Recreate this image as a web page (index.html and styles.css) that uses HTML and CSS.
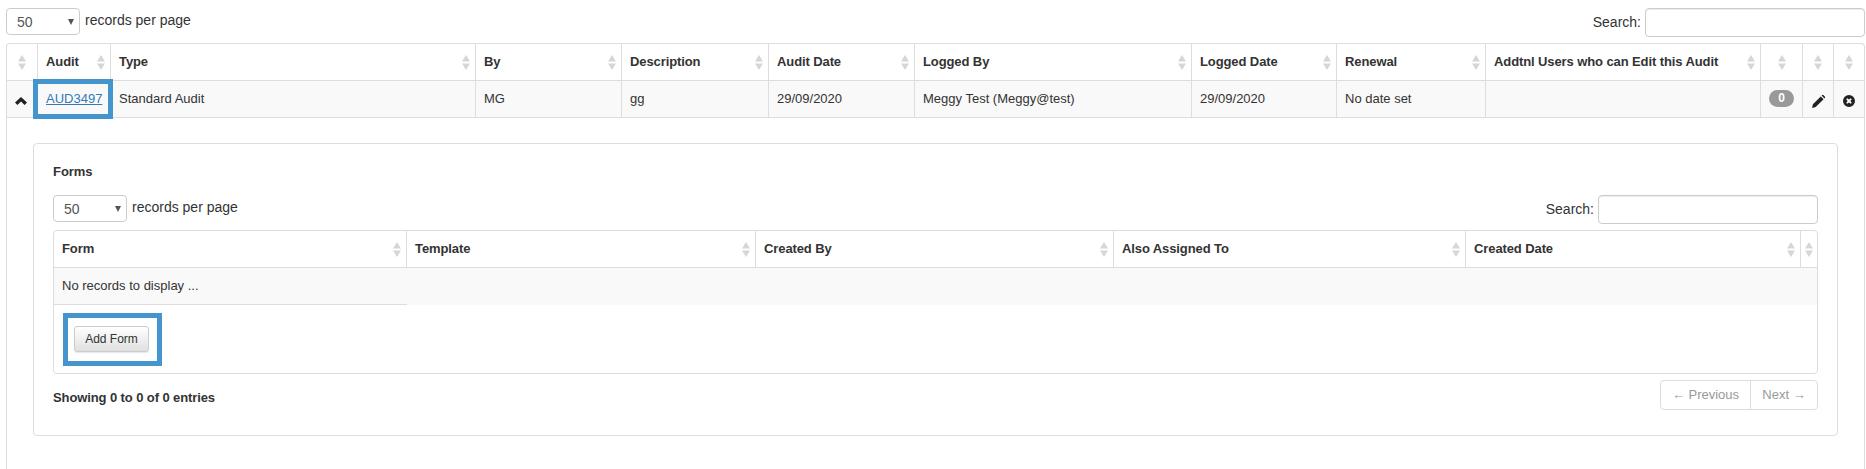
FILE: index.html
```html
<!DOCTYPE html>
<html lang="en">
<head>
<meta charset="utf-8">
<title>Audits</title>
<link rel="stylesheet" href="styles.css">
</head>
<body>
<svg class="defs" width="0" height="0" aria-hidden="true">
  <symbol id="sort" viewBox="0 0 8 15"><path d="M4 0 8 6.5H0Z" fill="#d6d6d6"/><path d="M0 8.5H8L4 15Z" fill="#d6d6d6"/></symbol>
</svg>
<main class="page">
  <div class="controls">
    <label class="length"><span class="select-wrap"><select class="select"><option>50</option></select></span> records per page</label>
    <label class="search">Search: <input class="search-input" type="text"></label>
  </div>
  <div class="outer">
    <table class="grid audits">
      <colgroup>
        <col class="a1"><col class="a2"><col class="a3"><col class="a4"><col class="a5"><col class="a6"><col class="a7"><col class="a8"><col class="a9"><col class="a10"><col class="a11"><col class="a12"><col class="a13">
      </colgroup>
      <thead>
        <tr>
          <th class="tight"><div class="th"><span></span><svg class="sort"><use href="#sort"/></svg></div></th>
          <th><div class="th"><span>Audit</span><svg class="sort"><use href="#sort"/></svg></div></th>
          <th><div class="th"><span>Type</span><svg class="sort"><use href="#sort"/></svg></div></th>
          <th><div class="th"><span>By</span><svg class="sort"><use href="#sort"/></svg></div></th>
          <th><div class="th"><span>Description</span><svg class="sort"><use href="#sort"/></svg></div></th>
          <th><div class="th"><span>Audit Date</span><svg class="sort"><use href="#sort"/></svg></div></th>
          <th><div class="th"><span>Logged By</span><svg class="sort"><use href="#sort"/></svg></div></th>
          <th><div class="th"><span>Logged Date</span><svg class="sort"><use href="#sort"/></svg></div></th>
          <th><div class="th"><span>Renewal</span><svg class="sort"><use href="#sort"/></svg></div></th>
          <th><div class="th"><span>Addtnl Users who can Edit this Audit</span><svg class="sort"><use href="#sort"/></svg></div></th>
          <th class="tight"><div class="th"><span></span><svg class="sort"><use href="#sort"/></svg></div></th>
          <th class="tight"><div class="th"><span></span><svg class="sort"><use href="#sort"/></svg></div></th>
          <th class="tight"><div class="th"><span></span><svg class="sort"><use href="#sort"/></svg></div></th>
        </tr>
      </thead>
      <tbody>
        <tr class="shaded">
          <td class="icon-cell">
            <svg class="chevron" viewBox="0 0 12 9"><path d="M6 0 12 5.6 9.6 8 6 4.6 2.4 8 0 5.6Z" fill="#222"/></svg>
          </td>
          <td class="audit-cell"><a class="link" href="#">AUD3497</a><span class="callout"></span></td>
          <td>Standard Audit</td>
          <td>MG</td>
          <td>gg</td>
          <td>29/09/2020</td>
          <td>Meggy Test (Meggy@test)</td>
          <td>29/09/2020</td>
          <td>No date set</td>
          <td></td>
          <td class="icon-cell"><span class="badge">0</span></td>
          <td class="icon-cell">
            <svg class="pencil" viewBox="0 0 13 13"><path d="M0 13 .9 9.3 8.8 1.4 11.6 4.2 3.7 12.1Z M9.6.6 10.2 0C10.6-.2 11-.2 11.3 0L13 1.7C13.2 2 13.2 2.4 13 2.8L12.4 3.4Z" fill="#222"/></svg>
          </td>
          <td class="icon-cell">
            <svg class="remove" viewBox="0 0 13 13"><path fill-rule="evenodd" d="M6.5 0a6.5 6.5 0 1 0 0 13 6.5 6.5 0 0 0 0-13ZM3.5 4.6 4.6 3.5 6.5 5 8.4 3.5 9.5 4.6 8 6.5 9.5 8.4 8.4 9.5 6.5 8 4.6 9.5 3.5 8.4 5 6.5Z" fill="#222"/></svg>
          </td>
        </tr>
      </tbody>
    </table>

    <section class="panel">
      <h2 class="panel-title">Forms</h2>
      <div class="controls">
        <label class="length"><span class="select-wrap"><select class="select"><option>50</option></select></span> records per page</label>
        <label class="search">Search: <input class="search-input" type="text"></label>
      </div>
      <div class="nested">
        <table class="grid forms">
          <colgroup>
            <col class="f1"><col class="f2"><col class="f3"><col class="f4"><col class="f5"><col class="f6">
          </colgroup>
          <thead>
            <tr>
              <th><div class="th"><span>Form</span><svg class="sort"><use href="#sort"/></svg></div></th>
              <th><div class="th"><span>Template</span><svg class="sort"><use href="#sort"/></svg></div></th>
              <th><div class="th"><span>Created By</span><svg class="sort"><use href="#sort"/></svg></div></th>
              <th><div class="th"><span>Also Assigned To</span><svg class="sort"><use href="#sort"/></svg></div></th>
              <th><div class="th"><span>Created Date</span><svg class="sort"><use href="#sort"/></svg></div></th>
              <th class="tight"><div class="th"><span></span><svg class="sort"><use href="#sort"/></svg></div></th>
            </tr>
          </thead>
          <tbody>
            <tr class="shaded">
              <td class="empty">No records to display ...</td>
              <td class="blank" colspan="5"></td>
            </tr>
          </tbody>
        </table>
        <div class="add-callout"><button class="btn" type="button">Add Form</button></div>
      </div>
      <div class="footer">
        <div class="info">Showing 0 to 0 of 0 entries</div>
        <div class="pager"><span class="pager-item prev">← Previous</span><span class="pager-item next">Next →</span></div>
      </div>
    </section>
  </div>
</main>
</body>
</html>
```
FILE: styles.css
```css
* { box-sizing: border-box; }
html, body { margin: 0; height: 469px; overflow: hidden; background: #fff; }
body { font-family: "Liberation Sans", Arial, sans-serif; font-size: 13px; color: #333; }
.defs { position: absolute; }

.page { padding: 8px 1px 0 6px; }

.controls { display: flex; justify-content: space-between; align-items: flex-start; margin-bottom: 6px; height: 29px; }
.length, .search { font-size: 14px; font-weight: 400; display: flex; align-items: flex-start; }
.length { gap: 5px; line-height: 24px; }
.search { gap: 4px; line-height: 28px; }
.select-wrap { position: relative; display: block; width: 74px; height: 27px; }
.select-wrap::after {
  content: ""; position: absolute; right: 6px; top: 11px;
  border-left: 3px solid transparent; border-right: 3px solid transparent; border-top: 6px solid #555;
}
.select {
  appearance: none; display: block; width: 100%; height: 100%;
  border: 1px solid #ccc; border-radius: 4px; background: #fff;
  padding: 0 0 0 10px; font: 14px "Liberation Sans", Arial, sans-serif; color: #555;
}
.search-input { width: 220px; height: 29px; border: 1px solid #ccc; border-radius: 4px; background: #fff; box-shadow: inset 0 1px 1px rgba(0,0,0,.075); }

.outer { border: 1px solid #ddd; border-bottom: 0; border-radius: 4px 4px 0 0; height: 440px; }

.grid { border-collapse: separate; border-spacing: 0; table-layout: fixed; width: 100%; }
.grid th, .grid td {
  height: 37px; padding: 0 5px 2px 8px; border-right: 1px solid #ddd; border-bottom: 1px solid #ddd;
  text-align: left; vertical-align: middle; overflow: visible; white-space: nowrap;
}
.grid th:last-child, .grid td:last-child { border-right: 0; }
.grid th { font-weight: 700; letter-spacing: -0.1px; }
.grid th.tight { padding: 0; }
.th { display: flex; justify-content: space-between; align-items: center; }
.tight .th { justify-content: center; }
.tight .th span { display: none; }
.sort { width: 8px; height: 15px; flex: none; margin-top: 2px; }
.tight .sort { margin-top: 0; }
.shaded td { background: #f9f9f9; }

.a1 { width: 31px; } .a2 { width: 73px; } .a3 { width: 365px; } .a4 { width: 146px; }
.a5 { width: 147px; } .a6 { width: 146px; } .a7 { width: 277px; } .a8 { width: 145px; }
.a9 { width: 149px; } .a10 { width: 275px; } .a11 { width: 42px; } .a12 { width: 31px; } .a13 { width: 30px; }
.f1 { width: 353px; } .f2 { width: 349px; } .f3 { width: 358px; } .f4 { width: 352px; } .f5 { width: 335px; } .f6 { width: 16px; }

.audits td.icon-cell { padding: 2px 0 0; text-align: center; }
.chevron { display: inline-block; width: 12px; height: 9px; vertical-align: middle; margin-right: 2px; }
.pencil { display: inline-block; width: 13px; height: 13px; vertical-align: middle; }
.remove { display: inline-block; width: 12px; height: 12px; vertical-align: middle; }
.badge {
  display: inline-block; width: 25px; height: 17px; margin-top: -5px; border-radius: 9px; background: #999; color: #fff;
  font-size: 12px; font-weight: 700; line-height: 17px; text-align: center; vertical-align: middle;
}
.audit-cell { position: relative; }
.link { color: #337ab7; text-decoration: underline; }
.callout { position: absolute; left: -5px; top: -2px; width: 80px; height: 40px; border: 5px solid #4495cd; }

.panel { margin: 25px 26px 0; height: 293px; border: 1px solid #ddd; border-radius: 4px; padding: 20px 19px 0; }
.panel-title { margin: 0 0 16px; font-size: 13px; line-height: 15px; font-weight: 700; color: #333; letter-spacing: -0.05px; }

.nested { border: 1px solid #ddd; border-radius: 4px; height: 144px; overflow: hidden; }
.forms .empty { height: 37px; border-right: 0; }
.forms .blank { border-bottom: 0; border-right: 0; }
.forms th { border-bottom: 1px solid #ddd; }

.add-callout { width: 99px; height: 53px; margin: 8px 0 0 9px; border: 5px solid #4495cd; padding: 8px 0 0 6px; }
.btn {
  display: block; width: 75px; height: 26px; padding: 0; border: 1px solid #ccc; border-radius: 3px;
  background: linear-gradient(#fff, #e0e0e0); font: 12px "Liberation Sans", Arial, sans-serif; color: #333;
  box-shadow: 0 1px 1px rgba(0,0,0,.1);
}

.footer { display: flex; justify-content: space-between; align-items: flex-start; margin-top: 6px; }
.info { font-weight: 700; line-height: 15px; margin-top: 10px; letter-spacing: -0.1px; }
.pager { display: flex; height: 30px; border: 1px solid #ddd; border-radius: 4px; }
.pager-item { display: flex; align-items: center; justify-content: center; color: #999; height: 100%; padding-bottom: 2px; }
.prev { width: 90px; border-right: 1px solid #ddd; }
.next { width: 66px; }
```
